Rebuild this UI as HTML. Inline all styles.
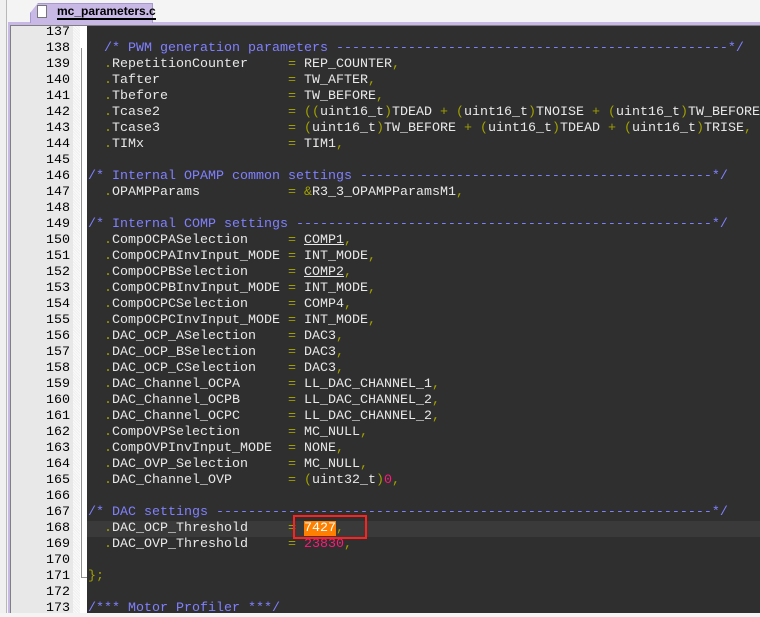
<!DOCTYPE html>
<html><head><meta charset="utf-8"><style>
*{margin:0;padding:0;box-sizing:border-box}
body{width:760px;height:613px;overflow:hidden;background:#f4f4f4;position:relative;font-family:"Liberation Mono",monospace}
#lp{position:absolute;left:0;top:0;width:7px;height:613px;background:#f0f0f0;border-right:1px solid #b8b8b8}
#tab{position:absolute;left:30px;top:3px;width:123px;height:20px;background:#c8b8e6;border:1px solid #a898d0;border-bottom:none;clip-path:polygon(8px 0,100% 0,100% 100%,0 100%,0 10px)}
#tabt{position:absolute;left:57px;top:4px;font:bold 12px "Liberation Sans",sans-serif;color:#000;border-bottom:2px solid #000;line-height:14px}
#ico{position:absolute;left:37px;top:5px;width:10px;height:13px;background:#fff;border:1px solid #777}
#frame{position:absolute;left:8px;top:22px;width:752px;height:591px;background:#c8b8e6}
#inner{position:absolute;left:10px;top:25px;width:750px;height:588px;background:#fff;border-top:1px solid #808080;border-left:1px solid #808080}
#gut{position:absolute;left:11px;top:26px;width:62px;height:587px;background:#e8e8e8}
#dot{position:absolute;left:73px;top:26px;width:7px;height:587px;background:repeating-linear-gradient(45deg,#f0f0f0 0 1px,#fafafa 1px 2px)}
#fold{position:absolute;left:81px;top:48px;width:1px;height:530px;background:#909090}
#foldh{position:absolute;left:81px;top:577px;width:6px;height:1px;background:#909090}
#ed{position:absolute;left:87px;top:26px;width:673px;height:587px;background:#2f2f2f;overflow:hidden}
#hl{position:absolute;left:87px;top:521px;width:673px;height:16px;background:#3a3a3a}
pre{position:absolute;top:25px;font-family:"Liberation Mono",monospace;font-size:13.33px;line-height:16px;white-space:pre}
#nums{left:11px;width:59px;text-align:right;color:#000}
#code{left:88px;color:#e8e8e8}
.o{color:#a0a000}.c{color:#8080ff}.n{color:#ff1a7a}.u{text-decoration:underline}
.hi{background:#ff8000;color:#fff}
#box{position:absolute;left:293px;top:515px;width:74px;height:24px;border:2px solid #ff2020}
</style></head><body>
<div id="lp"></div>
<div id="frame"></div>
<div id="tab"></div><div id="ico"></div><div id="tabt">mc_parameters.c</div>
<div id="inner"></div>
<div id="gut"></div><div id="dot"></div><div id="fold"></div><div id="foldh"></div>
<div id="ed"></div><div id="hl"></div>
<pre id="nums">137
138
139
140
141
142
143
144
145
146
147
148
149
150
151
152
153
154
155
156
157
158
159
160
161
162
163
164
165
166
167
168
169
170
171
172
173</pre>
<pre id="code">

  <span class="c">/* PWM generation parameters -------------------------------------------------*/</span>
  <span class="o">.</span>RepetitionCounter     <span class="o">=</span> REP_COUNTER<span class="o">,</span>
  <span class="o">.</span>Tafter                <span class="o">=</span> TW_AFTER<span class="o">,</span>
  <span class="o">.</span>Tbefore               <span class="o">=</span> TW_BEFORE<span class="o">,</span>
  <span class="o">.</span>Tcase2                <span class="o">=</span> <span class="o">((</span>uint16_t<span class="o">)</span>TDEAD <span class="o">+</span> <span class="o">(</span>uint16_t<span class="o">)</span>TNOISE <span class="o">+</span> <span class="o">(</span>uint16_t<span class="o">)</span>TW_BEFORE<span class="o">)</span>
  <span class="o">.</span>Tcase3                <span class="o">=</span> <span class="o">(</span>uint16_t<span class="o">)</span>TW_BEFORE <span class="o">+</span> <span class="o">(</span>uint16_t<span class="o">)</span>TDEAD <span class="o">+</span> <span class="o">(</span>uint16_t<span class="o">)</span>TRISE<span class="o">,</span>
  <span class="o">.</span>TIMx                  <span class="o">=</span> TIM1<span class="o">,</span>

<span class="c">/* Internal OPAMP common settings --------------------------------------------*/</span>
  <span class="o">.</span>OPAMPParams           <span class="o">=</span> <span class="o">&amp;</span>R3_3_OPAMPParamsM1<span class="o">,</span>

<span class="c">/* Internal COMP settings ----------------------------------------------------*/</span>
  <span class="o">.</span>CompOCPASelection     <span class="o">=</span> <span class="u">COMP1</span><span class="o">,</span>
  <span class="o">.</span>CompOCPAInvInput_MODE <span class="o">=</span> INT_MODE<span class="o">,</span>
  <span class="o">.</span>CompOCPBSelection     <span class="o">=</span> <span class="u">COMP2</span><span class="o">,</span>
  <span class="o">.</span>CompOCPBInvInput_MODE <span class="o">=</span> INT_MODE<span class="o">,</span>
  <span class="o">.</span>CompOCPCSelection     <span class="o">=</span> COMP4<span class="o">,</span>
  <span class="o">.</span>CompOCPCInvInput_MODE <span class="o">=</span> INT_MODE<span class="o">,</span>
  <span class="o">.</span>DAC_OCP_ASelection    <span class="o">=</span> DAC3<span class="o">,</span>
  <span class="o">.</span>DAC_OCP_BSelection    <span class="o">=</span> DAC3<span class="o">,</span>
  <span class="o">.</span>DAC_OCP_CSelection    <span class="o">=</span> DAC3<span class="o">,</span>
  <span class="o">.</span>DAC_Channel_OCPA      <span class="o">=</span> LL_DAC_CHANNEL_1<span class="o">,</span>
  <span class="o">.</span>DAC_Channel_OCPB      <span class="o">=</span> LL_DAC_CHANNEL_2<span class="o">,</span>
  <span class="o">.</span>DAC_Channel_OCPC      <span class="o">=</span> LL_DAC_CHANNEL_2<span class="o">,</span>
  <span class="o">.</span>CompOVPSelection      <span class="o">=</span> MC_NULL<span class="o">,</span>
  <span class="o">.</span>CompOVPInvInput_MODE  <span class="o">=</span> NONE<span class="o">,</span>
  <span class="o">.</span>DAC_OVP_Selection     <span class="o">=</span> MC_NULL<span class="o">,</span>
  <span class="o">.</span>DAC_Channel_OVP       <span class="o">=</span> <span class="o">(</span>uint32_t<span class="o">)</span><span class="n">0</span><span class="o">,</span>

<span class="c">/* DAC settings --------------------------------------------------------------*/</span>
  <span class="o">.</span>DAC_OCP_Threshold     <span class="o">=</span> <span class="hi">7427</span><span class="o">,</span>
  <span class="o">.</span>DAC_OVP_Threshold     <span class="o">=</span> <span class="n">23830</span><span class="o">,</span>

<span class="o">};</span>

<span class="c">/*** Motor Profiler ***/</span></pre>
<div id="box"></div>
</body></html>
